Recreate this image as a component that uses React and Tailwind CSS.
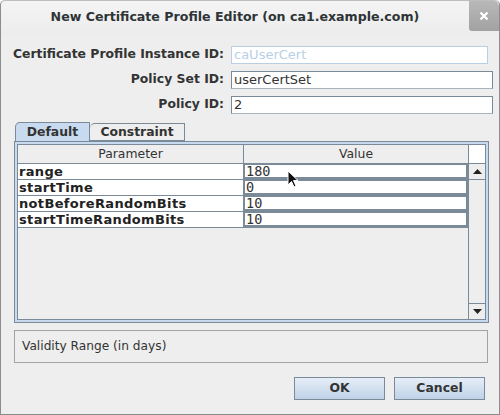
import React from "react";

const rows = [
  ["range", "180"],
  ["startTime", "0"],
  ["notBeforeRandomBits", "10"],
  ["startTimeRandomBits", "10"],
];

export default function App() {
  return (
    <div className="w-[500px] h-[415px] bg-[#eeeeee] flex flex-col overflow-hidden rounded-t-[5px] border border-[#8c8c8c] border-t-0 relative" style={{ fontFamily: '"DejaVu Sans", sans-serif' }}>
      {/* Title bar */}
      <div className="h-[36px] flex items-start bg-gradient-to-b from-[#f4f4f4] to-[#ececec] border-t border-[#bdbdbd] rounded-t-[5px]">
        <div className="flex-1 h-[33px] flex items-center justify-center text-[12.6px] font-bold text-[#2e3436]">
          New Certificate Profile Editor (on ca1.example.com)
        </div>
        <div className="w-[30px] h-[30px] bg-gradient-to-b from-[#b8b8b8] to-[#a2a2a2] rounded-bl-[3px] rounded-tr-[5px] flex items-center justify-center">
          <svg width="10" height="10" viewBox="0 0 10 10">
            <path d="M1.5 1.5 L8.5 8.5 M8.5 1.5 L1.5 8.5" stroke="#ffffff" strokeWidth="2.4" />
          </svg>
        </div>
      </div>

      {/* Form */}
      <div className="pt-[10px] flex flex-col gap-[8px] text-[12.4px]">
        <div className="flex items-center h-[17px]">
          <div className="w-[223px] text-right font-bold text-[#333333] whitespace-nowrap">Certificate Profile Instance ID:</div>
          <div className="ml-[7px] w-[257px] h-[18px] border border-[#b8cfe5] bg-white flex items-center px-[2px] text-[#b8cfe5] text-[13px]">caUserCert</div>
        </div>
        <div className="flex items-center h-[17px]">
          <div className="w-[223px] text-right font-bold text-[#333333]">Policy Set ID:</div>
          <div className="ml-[7px] w-[262px] h-[18px] border border-[#7a8a99] border-b-[#aab4bf] bg-white flex items-center px-[2px] text-[#333333] text-[13px]">userCertSet</div>
        </div>
        <div className="flex items-center h-[17px]">
          <div className="w-[223px] text-right font-bold text-[#333333]">Policy ID:</div>
          <div className="ml-[7px] w-[262px] h-[18px] border border-[#7a8a99] border-b-[#aab4bf] bg-white flex items-center px-[2px] text-[#333333] text-[13px]">2</div>
        </div>
      </div>

      {/* Tabs */}
      <div className="mt-[9px] ml-[14px] flex items-end h-[19px] text-[12.4px] font-bold text-[#333333]">
        <div className="relative w-[75px] h-[19px] bg-[#c8daef] border border-[#7a8a99] border-b-0 rounded-tl-[5px] flex items-center justify-center pt-[1px]">Default</div>
        <div className="w-[95px] h-[18px] bg-[#eeeeee] border border-[#7a8a99] border-l-0 rounded-tl-[5px] flex items-center justify-center">Constraint</div>
      </div>

      {/* Tab content */}
      <div className="ml-[13px] w-[475px] h-[182px] border border-[#7a8a99] bg-[#c8daef] p-[2px]">
        <div className="w-full h-full bg-[#eeeeee] border border-[#7a8a99] flex">
          <div className="flex-1 flex flex-col">
            <div className="flex h-[19px] text-[12.4px] text-[#333333] border-b border-[#7a8a99]">
              <div className="w-[226px] flex items-center justify-center border-r border-[#7a8a99] bg-[#eeeeee]">Parameter</div>
              <div className="flex-1 flex items-center justify-center bg-[#eeeeee]">Value</div>
            </div>
            {rows.map(([k, v]) => (
              <div key={k} className="flex h-[16px]">
                <div className="w-[226px] bg-white border-r border-b border-[#7a8a99] flex items-center pl-[1px] text-[13px] tracking-[0.34px] font-bold text-[#222222] whitespace-nowrap">{k}</div>
                <div className="flex-1 bg-white border-b border-[#7a8a99] p-0 flex">
                  <div className="flex-1 border border-[#7a8a99] border-r-[2px] border-b-[2px] bg-white flex items-center pl-[1px] text-[13.5px] text-[#333333]" style={{ fontFamily: '"DejaVu Sans Mono", monospace' }}>{v}</div>
                </div>
              </div>
            ))}
          </div>
          {/* scrollbar */}
          <div className="w-[17px] border-l border-[#7a8a99] flex flex-col bg-[#eeeeee]">
            <div className="h-[19px] border-b border-[#7a8a99] bg-white"></div>
            <div className="h-[16px] border-b border-[#7a8a99] flex items-center justify-center">
              <svg width="9" height="5" viewBox="0 0 9 5"><path d="M4.5 0 L9 5 L0 5 Z" fill="#222" /></svg>
            </div>
            <div className="flex-1"></div>
            <div className="h-[16px] border-t border-[#7a8a99] flex items-center justify-center">
              <svg width="9" height="5" viewBox="0 0 9 5"><path d="M0 0 L9 0 L4.5 5 Z" fill="#222" /></svg>
            </div>
          </div>
        </div>
      </div>

      {/* Description */}
      <div className="mt-[7px] ml-[13px] w-[474px] h-[33px] border border-[#a3a3a3] flex items-center pl-[7px] text-[12.2px] text-[#333333]">
        Validity Range (in days)
      </div>

      {/* Buttons */}
      <div className="mt-[14px] flex justify-end gap-[9px] pr-[14px] text-[12.4px] font-bold text-[#333333]">
        <div className="w-[91px] h-[23px] border border-[#7a8a99] bg-gradient-to-b from-[#e6eef7] to-[#bfd2e8] flex items-center justify-center">OK</div>
        <div className="w-[91px] h-[23px] border border-[#7a8a99] bg-gradient-to-b from-[#e6eef7] to-[#bfd2e8] flex items-center justify-center">Cancel</div>
      </div>

      {/* cursor */}
      <svg className="absolute left-[286px] top-[170px]" width="12" height="19" viewBox="0 0 12 19">
        <path d="M1 1 L1 15 L4.5 11.5 L7 17 L9 16 L6.5 10.5 L11 10.5 Z" fill="#111" stroke="#fff" strokeWidth="1" />
      </svg>
    </div>
  );
}
